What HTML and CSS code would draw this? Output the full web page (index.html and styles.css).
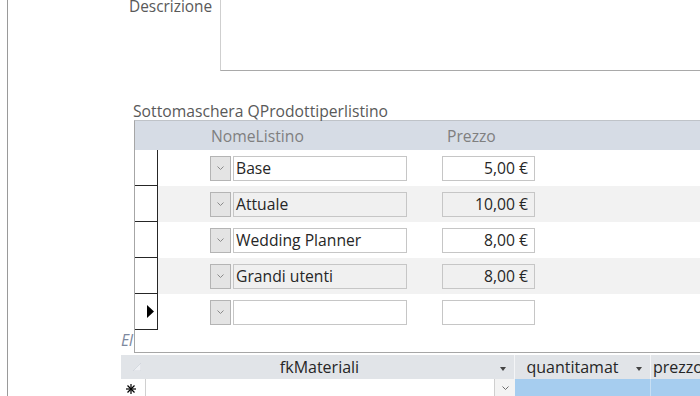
FILE: index.html
```html
<!DOCTYPE html>
<html>
  <head>
    <title>Prodotti</title>
    <link rel="stylesheet" href="styles.css">
  </head>
  <body>
    <div class="form">
      <div class="desc-row">
        <label class="lbl desc-lbl">Descrizione</label>
        <div class="memo"></div>
      </div>

      <div class="lbl sub-lbl">Sottomaschera QProdottiperlistino</div>

      <div class="subform">
        <div class="sub-head">
          <span class="h-nome">NomeListino</span>
          <span class="h-prezzo">Prezzo</span>
        </div>

        <div class="rec">
          <div class="sel"></div>
          <div class="fields">
            <span class="combo-btn"><svg width="7" height="4" viewBox="0 0 7 4"><polyline points="0.5,0.5 3.5,3.5 6.5,0.5" fill="none" stroke="#8a8a8a" stroke-width="1"/></svg></span>
            <span class="box nome">Base</span>
            <span class="box prezzo">5,00 €</span>
          </div>
        </div>
        <div class="rec alt">
          <div class="sel"></div>
          <div class="fields">
            <span class="combo-btn"><svg width="7" height="4" viewBox="0 0 7 4"><polyline points="0.5,0.5 3.5,3.5 6.5,0.5" fill="none" stroke="#8a8a8a" stroke-width="1"/></svg></span>
            <span class="box nome">Attuale</span>
            <span class="box prezzo">10,00 €</span>
          </div>
        </div>
        <div class="rec">
          <div class="sel"></div>
          <div class="fields">
            <span class="combo-btn"><svg width="7" height="4" viewBox="0 0 7 4"><polyline points="0.5,0.5 3.5,3.5 6.5,0.5" fill="none" stroke="#8a8a8a" stroke-width="1"/></svg></span>
            <span class="box nome">Wedding Planner</span>
            <span class="box prezzo">8,00 €</span>
          </div>
        </div>
        <div class="rec alt">
          <div class="sel"></div>
          <div class="fields">
            <span class="combo-btn"><svg width="7" height="4" viewBox="0 0 7 4"><polyline points="0.5,0.5 3.5,3.5 6.5,0.5" fill="none" stroke="#8a8a8a" stroke-width="1"/></svg></span>
            <span class="box nome">Grandi utenti</span>
            <span class="box prezzo">8,00 €</span>
          </div>
        </div>
        <div class="rec">
          <div class="sel current"><svg width="7" height="13" viewBox="0 0 7 13"><polygon points="0,0 7,6.5 0,13" fill="#000"/></svg></div>
          <div class="fields">
            <span class="combo-btn"><svg width="7" height="4" viewBox="0 0 7 4"><polyline points="0.5,0.5 3.5,3.5 6.5,0.5" fill="none" stroke="#8a8a8a" stroke-width="1"/></svg></span>
            <span class="box nome"></span>
            <span class="box prezzo"></span>
          </div>
        </div>
      </div>

      <div class="tail">
        <span class="lbl el-lbl">El</span>
        <div class="tail-box"></div>
      </div>

      <div class="sheet">
        <div class="sheet-head">
          <div class="corner"><svg width="8" height="8" viewBox="0 0 8 8"><polygon points="8,0 8,8 0,8" fill="#eef0f3" stroke="#c9ced6" stroke-width="0.6"/></svg></div>
          <div class="col col-mat">fkMateriali<span class="arrow"></span></div>
          <div class="col col-qta">quantitamat<span class="arrow"></span></div>
          <div class="col col-prz">prezzo</div>
        </div>
        <div class="sheet-row">
          <div class="corner new">
            <svg width="10" height="10" viewBox="0 0 10 10">
              <g stroke="#000" stroke-width="1.2">
                <line x1="5" y1="0" x2="5" y2="10"/>
                <line x1="0" y1="5" x2="10" y2="5"/>
                <line x1="1.5" y1="1.5" x2="8.5" y2="8.5"/>
                <line x1="8.5" y1="1.5" x2="1.5" y2="8.5"/>
              </g>
            </svg>
          </div>
          <div class="cell col-mat"><span class="cell-btn"><svg width="7" height="4" viewBox="0 0 7 4"><polyline points="0.5,0.5 3.5,3.5 6.5,0.5" fill="none" stroke="#6d6d6d" stroke-width="1"/></svg></span></div>
          <div class="cell col-qta blue"></div>
          <div class="cell col-prz blue"></div>
        </div>
      </div>
    </div>
  </body>
</html>
```

FILE: styles.css
```css
html, body {
  margin: 0;
  padding: 0;
  background: #fff;
  overflow: hidden;
}
body {
  font-family: 'Open Sans', 'Noto Sans', sans-serif;
  font-size: 15.7px;
  color: #262626;
}
.form {
  margin-left: 7px;
  border-left: 1px solid #9a9a9a;
  height: 396px;
  width: 692px;
  overflow: hidden;
}
.lbl {
  color: #595959;
}

/* descrizione */
.desc-row {
  display: flex;
  height: 71px;
}
.desc-lbl {
  margin: -4px 0 0 121px;
  width: 91px;
  line-height: 21px;
  font-size: 15.4px;
}
.memo {
  flex: 1;
  border-left: 1px solid #cfcfcf;
  border-bottom: 1px solid #a9a9a9;
}

/* sottomaschera */
.sub-lbl {
  margin: 31px 0 0 125px;
  line-height: 18px;
  height: 18px;
  white-space: nowrap;
}
.subform {
  margin-left: 126px;
  border-top: 1px solid #bfc3c8;
  border-left: 1px solid #a6a6a6;
}
.sub-head {
  height: 29px;
  background: #d6dce5;
  display: flex;
  align-items: center;
  color: #7f7f7f;
}
.h-nome {
  margin-left: 76px;
  width: 236px;
}
.rec {
  display: flex;
  height: 36px;
}
.rec.alt .fields {
  background: #f2f2f2;
}
.sel {
  border-right: 1px solid #262626;
  border-bottom: 1px solid #262626;
  display: flex;
  align-items: center;
  padding-left: 12px;
  box-sizing: border-box;
  width: 23px;
  height: 36px;
}
.rec:first-of-type .sel {
  border-top: 1px solid #262626;
}
.fields {
  flex: 1;
  display: flex;
  align-items: center;
  padding-left: 52px;
}
.combo-btn {
  width: 19px;
  height: 23px;
  border: 1px solid #b4b4b4;
  background: #e4e4e4;
  display: flex;
  align-items: center;
  justify-content: center;
}
.box {
  height: 23px;
  border: 1px solid #c6c6c6;
  background: #fff;
  line-height: 23px;
  color: #262626;
  white-space: nowrap;
}
.rec.alt .box {
  background: #f0f0f0;
}
.nome {
  margin-left: 2px;
  width: 170px;
  padding-left: 2px;
}
.prezzo {
  margin-left: 35px;
  width: 85px;
  padding-right: 6px;
  text-align: right;
}

/* parte inferiore */
.tail {
  display: flex;
  margin-left: 113px;
  height: 23px;
}
.el-lbl {
  width: 13px;
  overflow: hidden;
  font-style: italic;
  line-height: 20px;
  color: #7d889e;
}
.tail-box {
  flex: 1;
  border-left: 1px solid #a6a6a6;
  border-bottom: 1px solid #a6a6a6;
}
.sheet {
  margin: 2px 0 0 113px;
}
.sheet-head {
  display: flex;
  height: 24px;
  background: #e1e4e8;
  font-size: 16px;
  color: #262626;
}
.corner {
  width: 24px;
  display: flex;
  align-items: flex-end;
  justify-content: flex-end;
  padding: 0 4px 8px 0;
  box-sizing: border-box;
}
.col {
  display: flex;
  align-items: center;
  justify-content: center;
  position: relative;
  border-right: 1px solid #f4f5f7;
  box-sizing: border-box;
  padding-right: 20px;
  white-space: nowrap;
}
.col-mat {
  width: 370px;
}
.col-qta {
  width: 136px;
}
.col-prz {
  width: 49px;
  justify-content: flex-start;
  padding: 0 0 0 2px;
  border-right: none;
  overflow: hidden;
}
.arrow {
  position: absolute;
  right: 8px;
  top: 12px;
  border-left: 3px solid transparent;
  border-right: 3px solid transparent;
  border-top: 4px solid #444;
}
.sheet-row {
  display: flex;
  height: 18px;
}
.corner.new {
  align-items: center;
  justify-content: flex-start;
  padding: 2px 0 0 5px;
  background: #fff;
}
.cell {
  height: 18px;
  box-sizing: border-box;
}
.cell.col-mat {
  border-left: 1px solid #d0d0d0;
  display: flex;
  justify-content: flex-end;
}
.cell.col-qta {
  border-right: 1px solid #c8dff3;
}
.cell-btn {
  width: 20px;
  height: 18px;
  background: #f3f3f3;
  border-left: 1px solid #cfcfcf;
  display: flex;
  align-items: center;
  justify-content: center;
}
.blue {
  background: #a6cdef;
}
```
